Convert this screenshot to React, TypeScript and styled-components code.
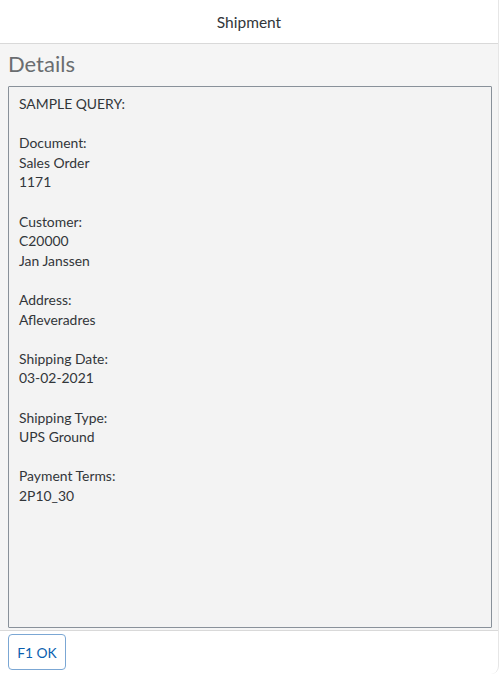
import React from "react";
import styled, { createGlobalStyle } from "styled-components";

const Global = createGlobalStyle`
  html, body { margin: 0; padding: 0; background: #ffffff; }
  body { font-family: Lato, "Open Sans", "Liberation Sans", sans-serif; }
`;

const Dialog = styled.div`
  width: 499px;
  height: 674px;
  box-sizing: border-box;
  display: flex;
  flex-direction: column;
  background: #ffffff;
  border-radius: 0 0 8px 8px;
  border-right: 1px solid #e6e6e6;
  overflow: hidden;
`;

const Header = styled.div`
  height: 43px;
  flex: none;
  display: flex;
  align-items: center;
  justify-content: center;
  border-bottom: 1px solid #d9d9d9;
  font-size: 15.5px;
  color: #32363a;
`;

const Content = styled.div`
  flex: 1;
  min-height: 0;
  background: #f5f5f5;
  display: flex;
  flex-direction: column;
  padding: 0 6px 2px 8px;
`;

const Title = styled.h2`
  margin: 0 0 3px;
  height: 39px;
  display: flex;
  align-items: center;
  font-size: 22px;
  font-weight: 400;
  color: #6a6d70;
`;

const TextBox = styled.div`
  flex: 1;
  border: 1px solid #89919a;
  border-radius: 1px;
  background: #f3f3f3;
  padding: 7px 10px;
  font-size: 13.9px;
  line-height: 19.6px;
  color: #32363a;
  white-space: pre-line;
`;

const Footer = styled.div`
  flex: none;
  height: 43px;
  border-top: 1px solid #d9d9d9;
  display: flex;
  align-items: center;
  padding: 0 8px;
`;

const Button = styled.button`
  height: 36px;
  width: 58px;
  padding: 0;
  margin-top: -1px;
  background: #ffffff;
  border: 1px solid #7ba7d4;
  border-radius: 4px;
  color: #0a5fb0;
  font-family: inherit;
  font-size: 13.8px;
`;

const text = `SAMPLE QUERY:

Document:
Sales Order
1171

Customer:
C20000
Jan Janssen

Address:
Afleveradres

Shipping Date:
03-02-2021

Shipping Type:
UPS Ground

Payment Terms:
2P10_30`;

export default function App() {
  return (
    <>
      <Global />
      <Dialog>
        <Header>Shipment</Header>
        <Content>
          <Title>Details</Title>
          <TextBox>{text}</TextBox>
        </Content>
        <Footer>
          <Button>F1 OK</Button>
        </Footer>
      </Dialog>
    </>
  );
}
